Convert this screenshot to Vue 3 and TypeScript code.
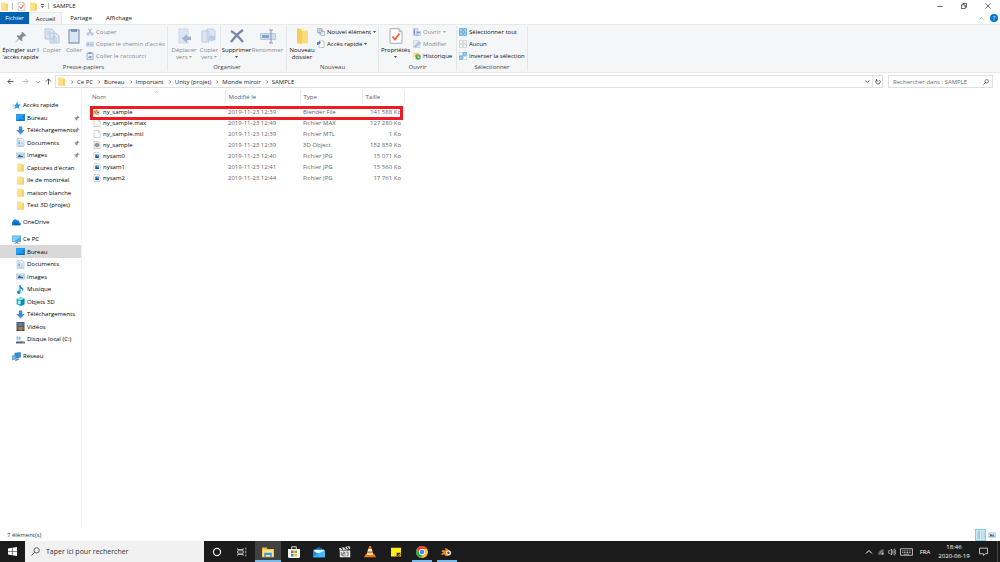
<script setup lang="ts">
import { ref } from 'vue'

interface NavItem { icon: string; label: string; child?: boolean; pinned?: boolean; active?: boolean }
interface FileRow { icon: string; name: string; date: string; type: string; size: string }

const query = ref('')
const taskQuery = ref('')

const tabs = ['Accueil', 'Partage', 'Affichage']
const crumbs = ['Ce PC', 'Bureau', 'Important', 'Unity (projet)', 'Monde miroir', 'SAMPLE']

const nav: NavItem[][] = [
  [
    { icon: 'star', label: 'Accès rapide' },
    { icon: 'desktop', label: 'Bureau', child: true, pinned: true },
    { icon: 'download', label: 'Téléchargements', child: true, pinned: true },
    { icon: 'docs', label: 'Documents', child: true, pinned: true },
    { icon: 'images', label: 'Images', child: true, pinned: true },
    { icon: 'folder', label: "Captures d'écran", child: true },
    { icon: 'folder', label: 'ile de montréal', child: true },
    { icon: 'folder', label: 'maison blanche', child: true },
    { icon: 'folder', label: 'Test 3D (projet)', child: true },
  ],
  [{ icon: 'cloud', label: 'OneDrive' }],
  [
    { icon: 'pc', label: 'Ce PC' },
    { icon: 'desktop', label: 'Bureau', child: true, active: true },
    { icon: 'docs', label: 'Documents', child: true },
    { icon: 'images', label: 'Images', child: true },
    { icon: 'music', label: 'Musique', child: true },
    { icon: 'cube', label: 'Objets 3D', child: true },
    { icon: 'download', label: 'Téléchargements', child: true },
    { icon: 'film', label: 'Vidéos', child: true },
    { icon: 'disk', label: 'Disque local (C:)', child: true },
  ],
  [{ icon: 'network', label: 'Réseau' }],
]

const files: FileRow[] = [
  { icon: 'blender', name: 'ny_sample', date: '2019-11-23 12:39', type: 'Blender File', size: '141 588 Ko' },
  { icon: 'page', name: 'ny_sample.max', date: '2019-11-23 12:49', type: 'Fichier MAX', size: '127 280 Ko' },
  { icon: 'page', name: 'ny_sample.mtl', date: '2019-11-23 12:39', type: 'Fichier MTL', size: '1 Ko' },
  { icon: 'object', name: 'ny_sample', date: '2019-11-23 12:39', type: '3D Object', size: '152 859 Ko' },
  { icon: 'jpg', name: 'nysam0', date: '2019-11-23 12:40', type: 'Fichier JPG', size: '15 071 Ko' },
  { icon: 'jpg', name: 'nysam1', date: '2019-11-23 12:41', type: 'Fichier JPG', size: '15 560 Ko' },
  { icon: 'jpg', name: 'nysam2', date: '2019-11-23 12:44', type: 'Fichier JPG', size: '17 761 Ko' },
]

const apps = [
  { icon: 'cortana', label: 'Cortana', state: '' },
  { icon: 'taskview', label: 'Vue des tâches', state: '' },
  { icon: 'explorer', label: 'Explorateur', state: 'active' },
  { icon: 'store', label: 'Store', state: '' },
  { icon: 'mail', label: 'Courrier', state: '' },
  { icon: 'clap', label: 'Vidéo', state: '' },
  { icon: 'vlc', label: 'VLC', state: '' },
  { icon: 'sticky', label: 'Notes', state: '' },
  { icon: 'chrome', label: 'Chrome', state: 'open' },
  { icon: 'blender', label: 'Blender', state: 'open' },
]
</script>

<template>
  <svg class="sprite" aria-hidden="true">
    <symbol id="folder" viewBox="0 0 16 16"><path d="M2 1h9v2h2l1 1v11H2z" fill="#ffe08a" /><path d="M11 3h3v12h-3z" fill="#f7cd5f" /><path d="M2 13h12v2H2z" fill="#f9d774" /></symbol>
    <symbol id="newfolder" viewBox="0 0 16 16"><path d="M3 0h7v2h4v14H3z" fill="#fff0b8" /><path d="M3 0l5 2v14l-5-1z" fill="#f8cc58" /><path d="M8 3h6v12H8z" fill="#fbdc7d" /></symbol>
    <symbol id="propsheet" viewBox="0 0 16 16"><path d="M2 .7h9l3 3v11.600H2z" fill="#fff" stroke="#a5abb3" /><path d="M11 .7v3h3" fill="none" stroke="#a5abb3" /><path d="M4.500 8.500l2.500 3 4.500-6" fill="none" stroke="#ee6236" stroke-width="1.800" /></symbol>
    <symbol id="star" viewBox="0 0 16 16"><path d="M9 1l1.800 4.600 5 .4-3.800 3.300 1.200 5L9 11.600l-4.300 2.700 1.200-5L4 7.600l3-2z" fill="#2d9ceb" /><path d="M0 7h4M1 10h4M2 13h3" stroke="#7bc1f2" stroke-width="1.200" /></symbol>
    <symbol id="desktop" viewBox="0 0 16 16"><path d="M0 2h16v12H0z" fill="#1182d8" /><path d="M0 2h16L4 13H0z" fill="#25a0f2" /><path d="M1 13h14" stroke="#075596" /><path d="M9 10h4" stroke="#71c7fb" /></symbol>
    <symbol id="download" viewBox="0 0 16 16"><path d="M5 1h6v6h4.500L8 15 .5 7H5z" fill="#3a8edb" /></symbol>
    <symbol id="docs" viewBox="0 0 16 16"><path d="M2 .5h9l3 3v12H2z" fill="#eef4f9" stroke="#96aabd" /><path d="M4 4h4M8 7h4M8 10h4M4 13h8" stroke="#60a8d7" /><path d="M4 6h3v5H4z" fill="#6bb4e5" /></symbol>
    <symbol id="images" viewBox="0 0 16 16"><path d="M.5 3.500h15v9H.5z" fill="#edf5fa" stroke="#93a3af" /><path d="M2 5h12v3H2z" fill="#9bd0f3" /><path d="M2 11l4-5 3 3 2-1 3 3z" fill="#24689d" /></symbol>
    <symbol id="cloud" viewBox="0 0 16 16"><path d="M1 13a3 3 0 010-6 4.500 4.500 0 018-3 4 4 0 014.500 4A2.600 2.600 0 0114 13z" fill="#1482d8" /><path d="M3 13a3 3 0 011-5l3-1 8 5-1 1z" fill="#0864b8" /></symbol>
    <symbol id="pc" viewBox="0 0 16 16"><path d="M.5 1.500h15v10H.5z" fill="#37a9ed" stroke="#598ab0" /><path d="M1 2h14L5 11H1z" fill="#7fd0fa" /><path d="M6 12h4v2h3v1H3v-1h3z" fill="#6c8193" /></symbol>
    <symbol id="music" viewBox="0 0 16 16"><path d="M6 0h2c0 4 5 4 5 8 0 2-1 3-2 4 1-4-1-5-3-6v7a3 3 0 11-2-3z" fill="#138bdc" /></symbol>
    <symbol id="cube" viewBox="0 0 16 16"><path d="M8 0l7 3v10l-7 3-7-3V3z" fill="#27b4d0" /><path d="M8 0l7 3-7 3-7-3z" fill="#86e4ed" /><path d="M8 6l7-3v10l-7 3z" fill="#098cae" /><path d="M4 7h4v5H4z" fill="#e9feff" /></symbol>
    <symbol id="film" viewBox="0 0 16 16"><path d="M1 0h14v16H1z" fill="#35393e" /><path d="M4 1h8v6H4z" fill="#5289b5" /><path d="M4 8h8v7H4z" fill="#a6814f" /><path d="M2.500 1v14M13.500 1v14" stroke="#d5d8da" stroke-dasharray="2 1.500" /></symbol>
    <symbol id="disk" viewBox="0 0 16 16"><path d="M1 3h3v2H1zM5 3h3v2H5zM1 6h3v2H1zM5 6h3v2H5z" fill="#25a5e8" /><path d="M2 10h11l3 2H0z" fill="#a8b1b7" /><path d="M0 12h16v3H0z" fill="#545e65" /><path d="M12 13h3v1h-3z" fill="#6ed767" /></symbol>
    <symbol id="network" viewBox="0 0 16 16"><path d="M5 2l10-1v8L6 11z" fill="#2598df" stroke="#286392" /><path d="M0 7l7-1v6l-6 2z" fill="#65bff0" stroke="#3877a5" /><path d="M5 14l6-3 2 2-6 3z" fill="#4a7ea2" /></symbol>
    <symbol id="pin" viewBox="0 0 16 16"><path d="M9 1l6 6-2 1-1-.5-3 3 .3 3L8 15l-3.500-4L1 15l-.3-.5L4 10 .8 7.500 2.300 6l3 .5 3-3L8 2z" fill="#87929b" /></symbol>
    <symbol id="page" viewBox="0 0 16 16"><path d="M2 .7h8.500l3.500 3.500v11H2z" fill="#fff" stroke="#a4a4a4" /><path d="M10.500.7v3.500H14" fill="none" stroke="#a4a4a4" /></symbol>
    <symbol id="object" viewBox="0 0 16 16"><path d="M2 .7h9l3 3v11.500H2z" fill="#fafafa" stroke="#999" /><path d="M8 4l3.500 2v4L8 12l-3.500-2V6z" fill="#ccc" stroke="#555" stroke-width="1.300" /><circle cx="8" cy="8" r="1.500" fill="#4a4a4a" /></symbol>
    <symbol id="jpg" viewBox="0 0 16 16"><path d="M2 .7h9l3 3v11.500H2z" fill="#fff" stroke="#a2a9ae" /><path d="M4.500 5h7v7h-7z" fill="#1675c5" /><path d="M4.500 12l2.500-3 2 2 2.500-2v3z" fill="#14487b" /><circle cx="9" cy="7" r="1" fill="#9eddff" /></symbol>
    <symbol id="blender" viewBox="0 0 16 16"><path d="M1 5.500h6L5 4l1.500-1.500L13 7a5 4.500 0 11-9 4l-2.500 1L0 10.500 4 8H1z" fill="#ef8a24" /><circle cx="10" cy="9" r="3" fill="#fff" /><circle cx="10" cy="9" r="1.800" fill="#265e9a" /></symbol>
    <symbol id="bigpin" viewBox="0 0 16 16"><path d="M10 1l5 5-2 1-1-.3-2.500 2.500.3 3-1.300 1.300-3.200-3L1 15l-.5-.5L5 9.800 2 7l1.300-1.300 3 .3L9 3.300 8.500 2z" fill="#818d98" /></symbol>
    <symbol id="copy" viewBox="0 0 16 16"><path d="M1 1h7l2 2v8H1zM6 5h6l3 3v7H6z" fill="#dce6f2" stroke="#b4c6dc" /><path d="M3 4h3M3 6h3M8 9h4M8 11h5M8 13h5" stroke="#b7cae0" /></symbol>
    <symbol id="paste" viewBox="0 0 16 16"><path d="M3 2h10v13H3z" fill="#dbe6f5" stroke="#8ba1c4" stroke-width="1.300" /><path d="M5 1h6v3H5z" fill="#8496b1" /></symbol>
    <symbol id="cut" viewBox="0 0 16 16"><path d="M5 1l5 9M11 1l-5 9" stroke="#8c9db3" stroke-width="1.500" fill="none" /><circle cx="4" cy="12" r="2.300" fill="none" stroke="#8ba6ca" stroke-width="1.500" /><circle cx="12" cy="12" r="2.300" fill="none" stroke="#8ba6ca" stroke-width="1.500" /></symbol>
    <symbol id="path" viewBox="0 0 16 16"><path d="M.5 4.500h15v8H.5z" fill="#cbdcf1" stroke="#a6bfdf" /><path d="M3 7v3l2-3 1 3M8 9h5" fill="none" stroke="#7693bd" /></symbol>
    <symbol id="shortcut" viewBox="0 0 16 16"><path d="M2 2h12v13H2z" fill="#eaf1fa" stroke="#768eb4" stroke-width="1.300" /><path d="M5 .5h6v3H5z" fill="#7386a4" /><path d="M5 12V9h4V7l3 3-3 3v-2" fill="#6386b9" /></symbol>
    <symbol id="move" viewBox="0 0 16 16"><path d="M3 1h9v14H3z" fill="#dce6f2" stroke="#cedaea" /><path d="M15 8.500h-4V6l-5 4.500 5 4.500v-3h4z" fill="#9fb4d3" /></symbol>
    <symbol id="copyto" viewBox="0 0 16 16"><path d="M1 3h7v11H1zM6 1h6l2 2v9H6z" fill="#dce6f2" stroke="#bccbe0" /><path d="M14 8h-3V6l-4 4 4 4v-2h3z" fill="#bccbe0" /></symbol>
    <symbol id="delete" viewBox="0 0 16 16"><path d="M2 3c4 2 7 5 12 11M14 2C9 5 6 9 2 14" fill="none" stroke="#7587a8" stroke-width="2.400" /></symbol>
    <symbol id="rename" viewBox="0 0 16 16"><path d="M.5 5.500h15v6H.5z" fill="#d3dff0" stroke="#b7c8df" /><path d="M2 7h7v3H2z" fill="#87a1ca" /><path d="M9 2h4m-2 0v13m-2 0h4" fill="none" stroke="#8597b4" /></symbol>
    <symbol id="newitem" viewBox="0 0 16 16"><path d="M1 1h8v8H1zM4 4h8v8H4z" fill="#e3edf4" stroke="#70828e" /><path d="M8 7h7v8H8z" fill="#fff" stroke="#6485a2" /><path d="M10 10h3" stroke="#4ea4e0" /></symbol>
    <symbol id="easy" viewBox="0 0 16 16"><path d="M4 2h10v13H4z" fill="#fff" stroke="#8b979f" /><path d="M0 10V4h4V1l4 4.500L4 9V7H3v3z" fill="#4685b5" /></symbol>
    <symbol id="open" viewBox="0 0 16 16"><path d="M1 1h9v14H1zM7 7h8v8H7z" fill="#d9e5f4" stroke="#91aacd" /><path d="M3 2v12M8 9h6" stroke="#7d9ccb" stroke-width="2" /></symbol>
    <symbol id="edit" viewBox="0 0 16 16"><path d="M1 1h10l3 3v11H1z" fill="#e5edf7" stroke="#adc0da" /><path d="M3 14l2-4 7-7 3 3-7 7z" fill="#b5c8e4" stroke="#8ba4c8" /></symbol>
    <symbol id="history" viewBox="0 0 16 16"><path d="M1 1h11v12H1z" fill="#f3d979" /><circle cx="10" cy="10" r="5.500" fill="#5da35c" /><path d="M10 7v4h3M3 14V9l3 3" fill="none" stroke="#edffe9" stroke-width="1.500" /></symbol>
    <symbol id="selall" viewBox="0 0 16 16"><path d="M1 1h6v6H1zM9 1h6v6H9zM1 9h6v6H1zM9 9h6v6H9z" fill="#8fccf7" stroke="#2d8cd5" /></symbol>
    <symbol id="selnone" viewBox="0 0 16 16"><path d="M1 1h6v6H1zM9 1h6v6H9zM1 9h6v6H1zM9 9h6v6H9z" fill="#fff" stroke="#b3b8be" /></symbol>
    <symbol id="selinv" viewBox="0 0 16 16"><path d="M1 1h6v6H1zM9 9h6v6H9z" fill="#fff" stroke="#9fb9cd" /><path d="M8 1h7v6H8zM1 8h6v7H1z" fill="#8fccf7" stroke="#3a91d3" /></symbol>
    <symbol id="win" viewBox="0 0 16 16"><path d="M0 2.500l7-1v6H0zM8 1.300L16 0v7.500H8zM0 8.500h7v6l-7-1zM8 8.500h8V16l-8-1.300z" fill="#fff" /></symbol>
    <symbol id="search" viewBox="0 0 16 16"><circle cx="10" cy="6" r="4.700" fill="none" stroke="currentColor" stroke-width="1.400" /><path d="M6.500 9.500L1 15" stroke="currentColor" stroke-width="1.500" /></symbol>
    <symbol id="cortana" viewBox="0 0 16 16"><circle cx="8" cy="8" r="5.700" fill="none" stroke="#eee" stroke-width="2" /></symbol>
    <symbol id="taskview" viewBox="0 0 16 16"><path d="M1 2v2h9V2M1 14v-2h9v2M1 6h9v4H1zM14 1v3M14 6v4M14 12v3" fill="none" stroke="#d5d5d5" stroke-width="1.300" /></symbol>
    <symbol id="explorer" viewBox="0 0 16 16"><path d="M0 2h6l1 2h9v11H0z" fill="#f7bd3b" /><path d="M1 5h14v9H1z" fill="#ffe28a" /><path d="M3 9h10v6h-2v-3H5v3H3z" fill="#359be0" /></symbol>
    <symbol id="store" viewBox="0 0 16 16"><path d="M5 4V1h6v3" fill="none" stroke="#e5e5e5" stroke-width="1.300" /><path d="M0 4h16v10l-1 2H1l-1-2z" fill="#f7f7f7" /><path d="M4 6h3.500v3.500H4z" fill="#ef4b2c" /><path d="M8.500 6H12v3.500H8.500z" fill="#7fba24" /><path d="M4 10.500h3.500V14H4z" fill="#169ce3" /><path d="M8.500 10.500H12V14H8.500z" fill="#fcba27" /></symbol>
    <symbol id="mail" viewBox="0 0 16 16"><path d="M0 6l8-5 8 5v9H0z" fill="#0864b6" /><path d="M1 5h14v5H1z" fill="#e7f7ff" /><path d="M0 6l8 5 8-5v9H0z" fill="#188bda" /><path d="M0 15l7-5 9-4v9z" fill="#42b9f3" /></symbol>
    <symbol id="clap" viewBox="0 0 16 16"><path d="M1 6h14v9H1z" fill="#efefef" /><path d="M0 3l14-3 1 4L1 6z" fill="#ddd" /><path d="M3 2l2 3M7 1l2 3M11 1l2 3" stroke="#222" stroke-width="1.500" /><path d="M3 8v5M5 8h2v2H5v3h2M10 8h2v5h-2" fill="none" stroke="#33785b" stroke-width="1.200" /><path d="M8 8v6" stroke="#d24e41" /></symbol>
    <symbol id="vlc" viewBox="0 0 16 16"><path d="M7 0h2l4 12H3z" fill="#f17b13" /><path d="M5.700 4h4.600l1 3H4.700zM4 9.500h8l.8 2.500H3.200z" fill="#eee" /><path d="M2 11h2l1 1h6l1-1h2l2 4H0z" fill="#ee7809" /></symbol>
    <symbol id="sticky" viewBox="0 0 16 16"><path d="M0 1h16v9l-5 5H0z" fill="#ffed17" /><path d="M9 9h7l-6 6H9z" fill="#343000" /><path d="M12 15l4-4v4z" fill="#e8cb00" /></symbol>
    <symbol id="chrome" viewBox="0 0 16 16"><circle cx="8" cy="8" r="8" fill="#f6c62c" /><path d="M1 4a8 8 0 0114 0H8L5 10z" fill="#e64637" /><path d="M1 4l4 6 4 1-2 5A8 8 0 011 4z" fill="#32a653" /><circle cx="8" cy="8" r="4" fill="#fff" /><circle cx="8" cy="8" r="3" fill="#4688ed" /></symbol>
    <symbol id="wifi" viewBox="0 0 16 16"><path d="M2 15A13 13 0 0115 2v13z" fill="#555" /><path d="M6 15a9 9 0 019-9M10 15a5 5 0 015-5" fill="none" stroke="#bbb" stroke-width="1.300" /><path d="M12 12h3v3h-3z" fill="#fff" /></symbol>
    <symbol id="sound" viewBox="0 0 16 16"><path d="M0 6h3l4-4v12l-4-4H0zM9 5q2 3 0 6M11 3q4 5 0 10M13 1q6 7 0 14" fill="none" stroke="#ddd" stroke-width="1.300" /></symbol>
    <symbol id="keyboard" viewBox="0 0 24 14"><path d="M1 1h22v12H1z" fill="none" stroke="#ddd" stroke-width="1.500" /><path d="M4 5h16M4 8h16" stroke="#ccc" stroke-width="1.500" stroke-dasharray="2 1" /><path d="M7 11h10" stroke="#ccc" stroke-width="1.300" /></symbol>
    <symbol id="notify" viewBox="0 0 16 16"><path d="M1 2h14v10h-4l-3 3v-3H1z" fill="none" stroke="#eee" stroke-width="1.400" /></symbol>
    <symbol id="up" viewBox="0 0 16 16"><path d="M2 11l6-6 6 6" fill="none" stroke="currentColor" stroke-width="2" /></symbol>
    <symbol id="down" viewBox="0 0 16 16"><path d="M2 5l6 6 6-6" fill="none" stroke="currentColor" stroke-width="2.500" /></symbol>
    <symbol id="right" viewBox="0 0 16 16"><path d="M5 2l6 6-6 6" fill="none" stroke="currentColor" stroke-width="3" /></symbol>
    <symbol id="arrow" viewBox="0 0 16 16"><path d="M15 8H2M8 2L2 8l6 6" fill="none" stroke="currentColor" stroke-width="2" /></symbol>
    <symbol id="caret" viewBox="0 0 8 4"><path d="M0 0h8L4 4z" fill="currentColor" /></symbol>
    <symbol id="refresh" viewBox="0 0 16 16"><path d="M4 3a6 6 0 108 0M4 0v5h5" fill="none" stroke="currentColor" stroke-width="1.800" /></symbol>
    <symbol id="min" viewBox="0 0 16 16"><path d="M1 9h14" stroke="#222" stroke-width="2" /></symbol>
    <symbol id="restore" viewBox="0 0 16 16"><path d="M1 5h10v10H1zM5 4V1h10v10h-3" fill="none" stroke="#222" stroke-width="2" /></symbol>
    <symbol id="close" viewBox="0 0 16 16"><path d="M1 1l14 14M15 1L1 15" stroke="#222" stroke-width="1.800" /></symbol>
    <symbol id="details" viewBox="0 0 16 16"><path d="M1 2h5M1 6h5M1 10h5M1 14h5" stroke="#8fa5b4" stroke-width="2" /><path d="M8 2h3M8 6h3M8 10h3M8 14h3M13 2h3M13 6h3M13 10h3M13 14h3" stroke="#a9b2b9" stroke-width="1.500" /></symbol>
  </svg>

  <div class="screen">
    <header class="titlebar">
      <svg class="i9"><use href="#folder" /></svg>
      <i class="tick" />
      <button class="plain" aria-label="Propriétés"><svg class="i9"><use href="#propsheet" /></svg></button>
      <button class="plain" aria-label="Nouveau dossier"><svg class="i9"><use href="#folder" /></svg></button>
      <button class="plain quick" aria-label="Personnaliser"><i /><svg class="caret"><use href="#caret" /></svg></button>
      <i class="tick" />
      <span class="title">SAMPLE</span>
      <div class="wincontrols">
        <button aria-label="Réduire"><svg class="i6"><use href="#min" /></svg></button>
        <button aria-label="Restaurer"><svg class="i6"><use href="#restore" /></svg></button>
        <button aria-label="Fermer"><svg class="i6"><use href="#close" /></svg></button>
      </div>
    </header>

    <nav class="tabs">
      <button class="file">Fichier</button>
      <button v-for="(t, i) in tabs" :key="t" :class="{ on: i === 0 }">{{ t }}</button>
      <div class="help">
        <button class="plain" aria-label="Réduire le ruban"><svg class="i5"><use href="#up" /></svg></button>
        <button class="helpdot">?</button>
      </div>
    </nav>

    <section class="ribbon">
      <div class="group clip">
        <div class="tools">
          <button class="big wide"><svg><use href="#bigpin" /></svg><span>Épingler sur l<br>'accès rapide</span></button>
          <button class="big off narrow"><svg><use href="#copy" /></svg><span>Copier</span></button>
          <button class="big off narrow"><svg><use href="#paste" /></svg><span>Coller</span></button>
          <div class="stack off">
            <button><svg><use href="#cut" /></svg>Couper</button>
            <button><svg><use href="#path" /></svg>Copier le chemin d'accès</button>
            <button><svg><use href="#shortcut" /></svg>Coller le raccourci</button>
          </div>
        </div>
        <h2>Presse-papiers</h2>
      </div>
      <div class="group organise">
        <div class="tools">
          <button class="big off"><svg><use href="#move" /></svg><span>Déplacer<br>vers <svg class="caret"><use href="#caret" /></svg></span></button>
          <button class="big off narrow"><svg><use href="#copyto" /></svg><span>Copier<br>vers <svg class="caret"><use href="#caret" /></svg></span></button>
          <i class="sep" />
          <button class="big mid"><svg><use href="#delete" /></svg><span>Supprimer<br><svg class="caret"><use href="#caret" /></svg></span></button>
          <button class="big off mid"><svg><use href="#rename" /></svg><span>Renommer</span></button>
        </div>
        <h2>Organiser</h2>
      </div>
      <div class="group create">
        <div class="tools">
          <button class="big"><svg><use href="#newfolder" /></svg><span>Nouveau<br>dossier</span></button>
          <div class="stack">
            <button><svg><use href="#newitem" /></svg>Nouvel élément<svg class="caret"><use href="#caret" /></svg></button>
            <button><svg><use href="#easy" /></svg>Accès rapide<svg class="caret"><use href="#caret" /></svg></button>
          </div>
        </div>
        <h2>Nouveau</h2>
      </div>
      <div class="group openers">
        <div class="tools">
          <button class="big mid"><svg><use href="#propsheet" /></svg><span>Propriétés<br><svg class="caret"><use href="#caret" /></svg></span></button>
          <div class="stack">
            <button class="off"><svg><use href="#open" /></svg>Ouvrir<svg class="caret"><use href="#caret" /></svg></button>
            <button class="off"><svg><use href="#edit" /></svg>Modifier</button>
            <button><svg><use href="#history" /></svg>Historique</button>
          </div>
        </div>
        <h2>Ouvrir</h2>
      </div>
      <div class="group select">
        <div class="tools">
          <div class="stack">
            <button><svg><use href="#selall" /></svg>Sélectionner tout</button>
            <button><svg><use href="#selnone" /></svg>Aucun</button>
            <button><svg><use href="#selinv" /></svg>Inverser la sélection</button>
          </div>
        </div>
        <h2>Sélectionner</h2>
      </div>
    </section>

    <div class="address">
      <div class="history">
        <button aria-label="Précédent"><svg class="i7"><use href="#arrow" /></svg></button>
        <button class="faint" aria-label="Suivant"><svg class="i7 flip"><use href="#arrow" /></svg></button>
        <button class="recent" aria-label="Récents"><svg class="i4"><use href="#down" /></svg></button>
        <button class="parent" aria-label="Dossier parent"><svg class="i7 turn"><use href="#arrow" /></svg></button>
      </div>
      <div class="pathbox">
        <svg class="i9"><use href="#folder" /></svg>
        <template v-for="c in crumbs" :key="c">
          <svg class="chev"><use href="#right" /></svg>
          <button class="crumb">{{ c }}</button>
        </template>
        <button class="drop" aria-label="Emplacements"><svg class="i5"><use href="#down" /></svg></button>
        <button class="reload" aria-label="Actualiser"><svg class="i6"><use href="#refresh" /></svg></button>
      </div>
      <label class="searchbox">
        <input v-model="query" aria-label="Rechercher" placeholder="Rechercher dans : SAMPLE">
        <svg class="i6"><use href="#search" /></svg>
      </label>
    </div>

    <main class="body">
      <aside class="side">
        <ul v-for="(g, gi) in nav" :key="gi">
          <li v-for="n in g" :key="n.label" :class="{ child: n.child, active: n.active }">
            <a href="#">
              <svg class="i9"><use :href="'#' + n.icon" /></svg>
              <span>{{ n.label }}</span>
              <svg v-if="n.pinned" class="pin"><use href="#pin" /></svg>
            </a>
          </li>
        </ul>
      </aside>
      <section class="list">
        <div class="tablewrap">
          <svg class="sort"><use href="#up" /></svg>
          <table>
            <colgroup><col class="c1"><col class="c2"><col class="c3"><col class="c4"></colgroup>
            <thead><tr><th>Nom</th><th>Modifié le</th><th>Type</th><th>Taille</th></tr></thead>
            <tbody>
              <tr v-for="f in files" :key="f.name + f.type">
                <td class="name"><svg class="i8"><use :href="'#' + f.icon" /></svg>{{ f.name }}</td>
                <td>{{ f.date }}</td>
                <td>{{ f.type }}</td>
                <td class="size">{{ f.size }}</td>
              </tr>
            </tbody>
          </table>
          <div class="mark" />
        </div>
      </section>
    </main>

    <footer class="status">
      <span>7 élément(s)</span>
      <button class="view on" aria-label="Détails"><svg class="i8"><use href="#details" /></svg></button>
      <button class="view" aria-label="Grandes icônes"><svg class="i8"><use href="#images" /></svg></button>
    </footer>

    <div class="taskbar">
      <button class="start" aria-label="Démarrer"><svg class="i9"><use href="#win" /></svg></button>
      <label class="tasksearch">
        <svg class="i9"><use href="#search" /></svg>
        <input v-model="taskQuery" aria-label="Recherche Windows" placeholder="Taper ici pour rechercher">
      </label>
      <div class="apps">
        <button v-for="a in apps" :key="a.icon" :class="a.state" :aria-label="a.label">
          <svg :class="'app-' + a.icon"><use :href="'#' + a.icon" /></svg>
        </button>
      </div>
      <div class="tray">
        <button aria-label="Icônes cachées"><svg class="i8"><use href="#up" /></svg></button>
        <button aria-label="Réseau"><svg class="i7"><use href="#wifi" /></svg></button>
        <button aria-label="Volume"><svg class="i8"><use href="#sound" /></svg></button>
        <button aria-label="Clavier"><svg class="kbd"><use href="#keyboard" /></svg></button>
        <button class="lang">FRA</button>
        <button class="clock"><span>18:46</span><span>2020-06-19</span></button>
        <button class="note" aria-label="Notifications"><svg class="i9"><use href="#notify" /></svg></button>
      </div>
    </div>
  </div>
</template>

<style>
html, body { margin: 0; background: #fff; }
</style>

<style scoped>
* { box-sizing: border-box; }
.sprite { position: absolute; width: 0; height: 0; }
.screen { display: flex; flex-direction: column; min-height: 100vh; background: #fff; color: #111; font: 6px/8px "Open Sans", "Noto Sans", sans-serif; }
button, input { margin: 0; padding: 0; border: 0; background: none; font: inherit; color: inherit; }
button { display: flex; align-items: center; justify-content: center; white-space: nowrap; }
svg { display: block; flex: none; }
.i4 { width: 4px; height: 4px; }
.i5 { width: 5px; height: 5px; }
.i6 { width: 6px; height: 6px; }
.i7 { width: 7px; height: 7px; }
.i8 { width: 8px; height: 8px; }
.i9 { width: 9px; height: 9px; }
.caret { width: 3px; height: 2px; }

.titlebar { display: flex; align-items: center; height: 12px; }
.tick { width: 1px; height: 6px; margin: 0 4px 0 3px; background: #bbb; }
.titlebar .plain { margin-right: 3px; }
.titlebar .quick { flex-direction: column; gap: 1px; margin: 0 1px 0 0; }
.quick i { width: 3px; height: 1px; background: #444; }
.wincontrols { display: flex; align-self: stretch; margin-left: auto; }
.wincontrols button { width: 24px; }

.tabs { display: flex; height: 12px; }
.tabs > button { width: 38px; }
.tabs > button.file { width: 29px; background: #0063b1; color: #fff; }
.tabs > button.on { width: 33px; background: #f5f6f7; border: 1px solid #e8e9ea; border-width: 1px 1px 0; }
.help { display: flex; align-items: center; gap: 6px; margin-left: auto; padding-right: 2px; color: #888; }
.helpdot { width: 8px; height: 8px; border-radius: 50%; background: #0078d7; color: #fff; }

.ribbon { display: flex; height: 49px; background: #f5f6f7; border: 1px solid #e7e8e9; border-width: 1px 0; }
.group { display: flex; flex-direction: column; justify-content: space-between; margin: 1px 0; border-right: 1px solid #e5e6e8; }
.clip { width: 168px; }
.organise { width: 119px; }
.create { width: 92px; }
.openers { width: 78px; }
.select { width: 71px; }
.group h2 { margin: 0; font: inherit; text-align: center; color: #444; }
.tools { display: flex; height: 36px; }
.big { flex-direction: column; justify-content: flex-start; width: 30px; padding-top: 2px; line-height: 7px; }
.big > svg { width: 16px; height: 16px; margin-bottom: 3px; }
.clip .wide > svg { width: 12px; height: 12px; margin: 3px 0 4px; }
.big .caret { display: inline-block; vertical-align: middle; }
.wide { width: 41px; }
.narrow { width: 22px; }
.mid { width: 31px; }
.organise .tools { padding-left: 1px; }
.organise .narrow { width: 20px; }
.openers .tools { padding-left: 1px; }
.off { color: #858a90; }
.sep { width: 1px; height: 34px; margin-left: 1px; background: #e5e6e8; }
.stack { display: flex; flex-direction: column; align-items: flex-start; padding-left: 2px; }
.stack button { height: 12px; gap: 2px; }
.stack button > svg:first-child { width: 8px; height: 8px; }
.clip .stack { padding-left: 1px; }
.create .stack { padding-left: 0; }

.address { display: flex; align-items: center; height: 17px; padding: 0 7px 0 5px; color: #222; }
.history { display: flex; align-items: center; width: 50px; color: #444; }
.history button { width: 10px; }
.history .faint { width: 20px; color: #bbb; }
.history .recent { width: 6px; }
.history .parent { width: 14px; }
.flip { transform: rotate(180deg); }
.turn { transform: rotate(90deg); }
.pathbox { display: flex; flex: 1; align-items: center; height: 13px; padding-left: 1px; border: 1px solid #dfdfdf; }
.chev { width: 4px; height: 4px; margin: 0 3px 0 4px; color: #555; }
.drop { width: 10px; margin-left: auto; }
.reload { align-self: stretch; width: 10px; border-left: 1px solid #e2e2e2; }
.searchbox { display: flex; align-items: center; width: 105px; height: 13px; margin-left: 5px; padding: 0 3px 0 4px; border: 1px solid #dfdfdf; }
.searchbox input { flex: 1; min-width: 0; height: 10px; outline: 0; }
.searchbox input::placeholder { color: #6d6d6d; opacity: 1; }

.body { display: flex; flex: 1; }
.side { display: flex; flex-direction: column; gap: 5px; width: 82px; padding-top: 9px; border-right: 1px solid #f2f2f2; color: #000; }
.side ul { display: grid; grid-auto-rows: 12px 13px; margin: 0; padding: 0; list-style: none; }
.side li { display: flex; min-width: 0; padding-left: 12px; }
.side .child { padding-left: 16px; }
.side .active { background: #d9d9d9; }
.side a { display: flex; flex: 1; align-items: center; gap: 2px; min-width: 0; color: inherit; text-decoration: none; white-space: nowrap; }
.side span { flex: 1; min-width: 0; }
.pin { width: 6px; height: 6px; margin-right: 1px; }

.list { flex: 1; min-width: 0; }
.tablewrap { position: relative; width: 322px; }
table { width: 100%; table-layout: fixed; border-collapse: collapse; }
.c1 { width: 143px; }
.c2 { width: 75px; }
.c3 { width: 62px; }
.c4 { width: 42px; }
th { height: 13px; padding: 0 3px; border-right: 1px solid #ececec; font-weight: 400; text-align: left; color: #4c607a; }
th:first-child { padding-left: 10px; }
tbody::before { content: ""; display: block; height: 3px; }
td { height: 11px; padding: 0 3px; white-space: nowrap; color: #666; }
.name { display: flex; align-items: center; gap: 2px; padding-left: 11px; color: #000; }
.size { text-align: right; }
.sort { position: absolute; left: 72px; top: 0; width: 5px; height: 4px; color: #777; }
.mark { position: absolute; left: 8px; right: 1px; top: 16px; height: 14px; border: 3px solid #ed1c24; }

.status { display: flex; align-items: center; height: 12px; padding: 0 3px 0 7px; color: #1e395b; }
.status span { margin-right: auto; }
.view { width: 11px; height: 12px; }
.view.on { border: 1px solid #7fcdef; background: #cceaf8; }

.taskbar { display: flex; height: 21px; background: #1b1b1b; color: #fff; }
.start { width: 25px; }
.tasksearch { display: flex; align-items: center; gap: 6px; width: 179px; padding-left: 6px; background: #f1f1f1; color: #333; }
.tasksearch input { flex: 1; min-width: 0; height: 12px; outline: 0; font-size: 7px; }
.tasksearch input::placeholder { color: #333; opacity: 1; }
.apps { display: flex; width: 256px; }
.apps button { flex: 1; border: solid transparent; border-width: 2px 0; }
.apps svg { width: 12px; height: 12px; }
.apps .app-cortana, .apps .app-taskview, .apps .app-sticky { width: 10px; height: 10px; }
.apps .active { background: #414141; border-bottom-color: #76b9ed; }
.apps .open { background: linear-gradient(#76b9ed, #76b9ed) bottom / 20px 2px no-repeat border-box; }
.tray { display: flex; gap: 4px; margin: 0 2px 0 auto; padding-right: 5px; border-right: 1px solid #444; }
.kbd { width: 13px; height: 8px; }
.lang { width: 16px; }
.clock { flex-direction: column; width: 34px; line-height: 9px; }
.note { width: 17px; }
</style>
